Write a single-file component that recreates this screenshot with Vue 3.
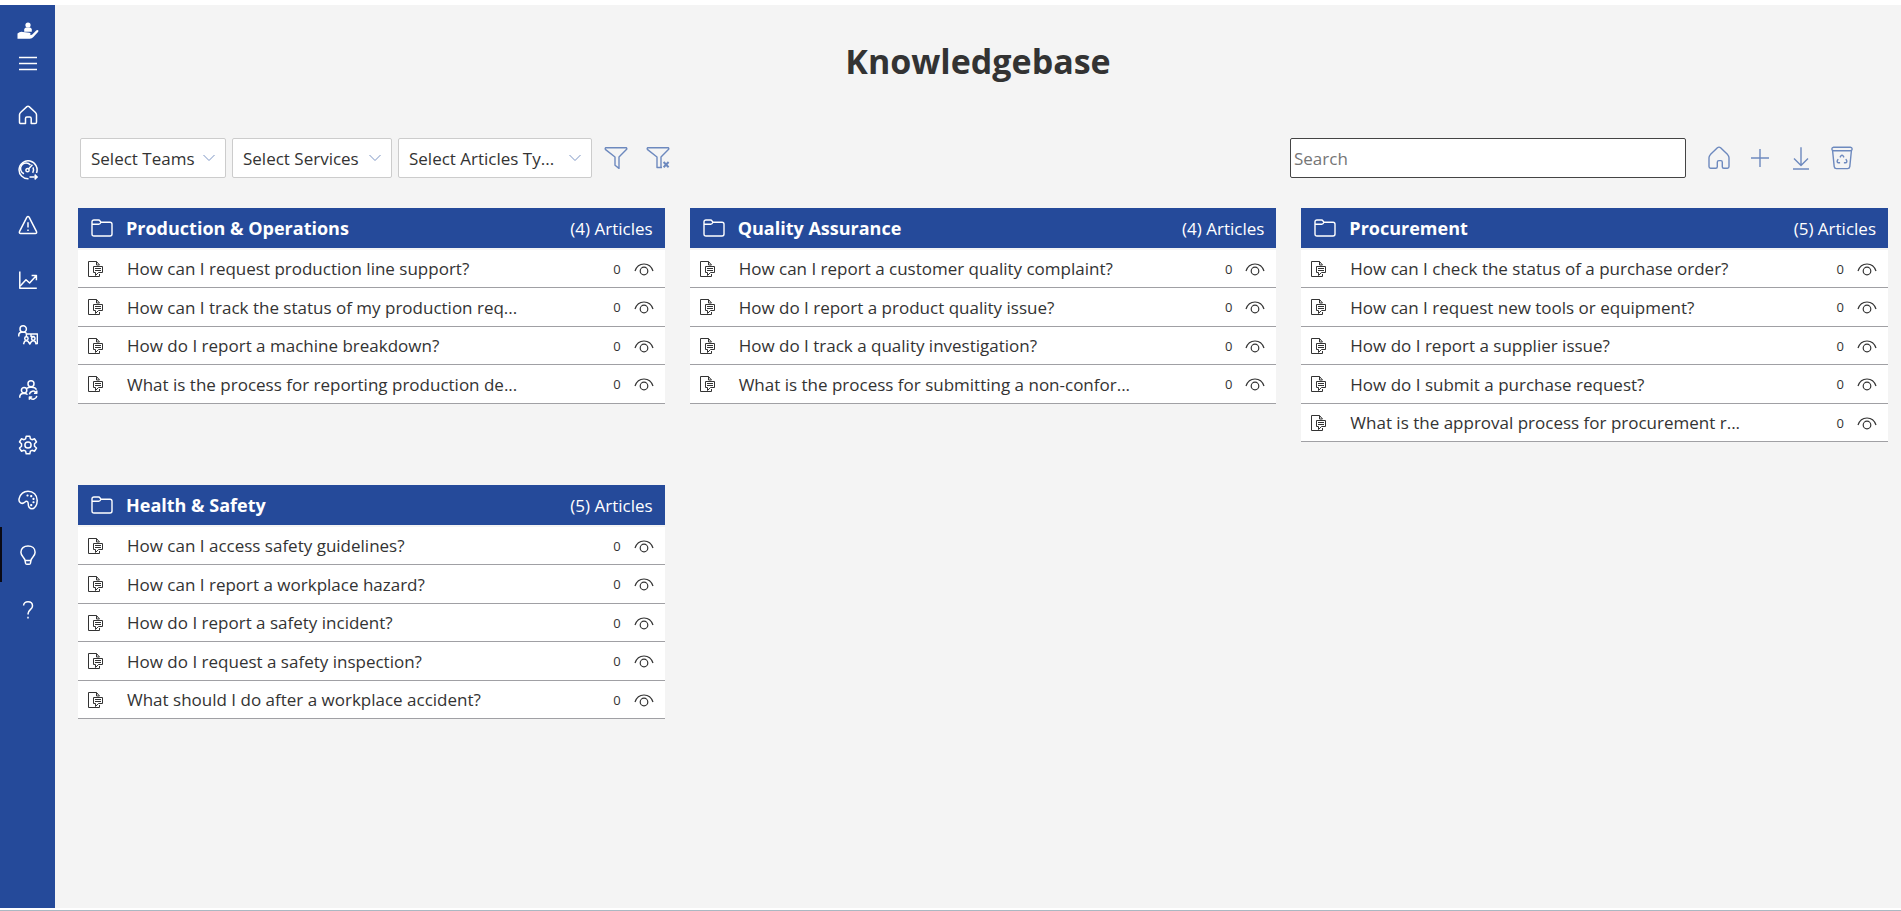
<script setup>
import { reactive, ref } from 'vue'

defineOptions({
  name: 'KnowledgeBase'
})

const search = ref('')

const filters = reactive([
  { id: 'teams', label: 'Select Teams', size: 'small' },
  { id: 'services', label: 'Select Services', size: 'medium' },
  { id: 'types', label: 'Select Articles Ty...', size: 'large' }
])

const navItems = [
  {
    name: 'Home',
    paths: ['M2.8 7.2 8.9 1.6q1.1-.9 2.2 0l6.1 5.6q1.3 1.2 1.3 2.6v7.4q0 1.4-1.4 1.4h-3.9v-5.2q0-1.4-1.4-1.4H8.9q-1.4 0-1.4 1.4v5.2H2.9q-1.4 0-1.4-1.4V9.8q0-1.4 1.3-2.6z']
  },
  {
    name: 'Dashboard',
    paths: [
      'M10.5 18.8A9 9 0 1 1 18.5 13',
      'M6 13.8A5.6 5.6 0 1 1 12.4 5M15 7.4a5.6 5.6 0 0 1-.3 5.4',
      'M14.4 4.8 10.5 9',
      'M7.9 10.2a1.6 1.6 0 1 0 3.2 0 1.6 1.6 0 1 0-3.2 0z',
      'M11.5 17h7.6M16.6 14.6 19.2 17l-2.6 2.4'
    ]
  },
  {
    name: 'Incidents',
    paths: ['M8.9 2.2q1.1-1.6 2.2 0l7.3 14.2q.9 1.9-1.2 2.1H2.8q-2.1-.2-1.2-2.1z', 'M10 7.2v5.4M10 14.4v1.6']
  },
  {
    name: 'Reports',
    paths: ['M1.8 1.5v16.7h17', 'M2.2 16 8 9.8l3.6 3.2 6.6-7.2M13.6 5.4h4.8v4.8']
  },
  {
    name: 'Training',
    paths: [
      'M2 4a3.2 3.2 0 1 0 6.4 0 3.2 3.2 0 1 0-6.4 0z',
      'M.8 11.5V9.6q.3-2.3 2.8-2.3h2.8q1.5 0 2.2 1.5',
      'M8.4 12V9h11v9.5h-1.8M13 9v2.5h3.5',
      'M6.7 13.5a1.7 1.7 0 1 0 3.4 0 1.7 1.7 0 1 0-3.4 0zM13.6 13.5a1.7 1.7 0 1 0 3.4 0 1.7 1.7 0 1 0-3.4 0z',
      'M5.5 19.2l1-2.8q1.8-1.2 3.6 0l1.7 2.6 1.7-2.6q1.8-1.2 3.6 0l1.2 2.8'
    ]
  },
  {
    name: 'Teams',
    paths: [
      'M10 3.8a3 3 0 1 0 6 0 3 3 0 1 0-6 0z',
      'M3.4 10.2a2.7 2.7 0 1 0 5.4 0 2.7 2.7 0 1 0-5.4 0z',
      'M1.8 17.8v-1.4q.3-2.8 3-3h2.2q1.8.1 2.4 1.4M9 8.4q1-1.2 3.4-1.2h1q4.2-.1 5 2.6',
      'M11.4 14.4a3.8 3.8 0 0 1 6.8-1.8M18.8 10.4v2.8H16M18.8 15.8a3.8 3.8 0 0 1-6.8 1.8M11.4 19.8V17h2.8'
    ]
  },
  {
    name: 'Settings',
    paths: [
      'M8.2 1.2h3.6l.6 2.6 1.6.9 2.6-.9 1.9 3.2-2 1.8v2.4l2 1.8-1.9 3.2-2.6-.9-1.6.9-.6 2.6H8.2l-.6-2.6-1.6-.9-2.6.9L1.5 13l2-1.8V8.8L1.5 7l1.9-3.2 2.6.9 1.6-.9z',
      'M6.9 10a3.1 3.1 0 1 0 6.2 0 3.1 3.1 0 1 0-6.2 0z'
    ]
  },
  {
    name: 'Themes',
    paths: [
      'M1.2 8.4C2.6 3.6 6 1.2 10 1.2c5.3 0 9.2 3.9 9.2 9.2 0 4.8-2.5 8.4-5.2 8.4-3.6 0-3.8-2.7-3.8-5.2 0-2.3-1.9-3-3.2-1.6-1.2 1.2-2.9 1.8-4.4.9-1.7-1-1.9-2.7-1.4-4.5z',
      'M9.2 5.2h.6v.6h-.6zM12.9 5.8h.6v.6h-.6zM15.2 8.6h.6v.6h-.6zM15.2 12h.6v.6h-.6zM12.9 14.8h.6v.6h-.6z'
    ]
  },
  {
    name: 'Knowledgebase',
    active: true,
    paths: ['M7 15.4C6.6 12 2.9 11.4 2.9 7.2 2.9 3.4 6 1 10 1s7.1 2.4 7.1 6.2c0 4.2-3.7 4.8-4.1 8.2zM7 15.4l.6 3q.2.8 1.1.8h2.6q.9 0 1.1-.8l.6-3']
  },
  {
    name: 'Help',
    paths: ['M5.6 5.6C5.6 3 7.4 1.8 10 1.8s4.5 1.5 4.5 4.1c0 3.5-4.4 3.9-4.4 7.6v1', 'M10 16.8v1.6']
  }
]

const actions = [
  {
    name: 'Home',
    paths: ['M3.4 8.6 10.4 1.8q1.6-1.3 3.2 0l7 6.8q1.4 1.6 1.4 3.2v8.8q0 1.6-1.6 1.6h-3.6q-1.5 0-1.5-1.5v-4.5q0-1.6-1.4-1.6h-2q-1.6 0-1.6 1.6v4.5q0 1.5-1.5 1.5H3.6Q2 22.2 2 20.6v-8.800q0-1.600 1.400-3.200z']
  },
  { name: 'Add', paths: ['M12 3v18M3 12h18'] },
  { name: 'Download', paths: ['M12 1.2v18M5 12.600l7 7 7-7M4 23h16'] },
  {
    name: 'Recycle bin',
    paths: [
      'M3.6 1.2h16.8q1.6.1 1.8 1.8-.1 1.7-1.8 1.8H3.6Q1.900 4.700 1.800 3 2 1.300 3.600 1.200z',
      'M2.6 4.8l1.6 15.8q.3 2 2.2 2h11.200q1.900 0 2.200-2l1.600-15.800',
      'M10 11.4l.9-1.5q1.1-1.5 2.2 0l.9 1.5M15.8 13.2l.9 1.5q.6 1.8-1.200 2h-1.600M10.100 16.700H8.500q-1.800-.2-1.200-2l.9-1.500'
    ]
  }
]

const categories = [
  {
    name: 'Production & Operations',
    articles: [
      'How can I request production line support?',
      'How can I track the status of my production req...',
      'How do I report a machine breakdown?',
      'What is the process for reporting production de...'
    ]
  },
  {
    name: 'Quality Assurance',
    articles: [
      'How can I report a customer quality complaint?',
      'How do I report a product quality issue?',
      'How do I track a quality investigation?',
      'What is the process for submitting a non-confor...'
    ]
  },
  {
    name: 'Procurement',
    articles: [
      'How can I check the status of a purchase order?',
      'How can I request new tools or equipment?',
      'How do I report a supplier issue?',
      'How do I submit a purchase request?',
      'What is the approval process for procurement r...'
    ]
  },
  {
    name: 'Health & Safety',
    articles: [
      'How can I access safety guidelines?',
      'How can I report a workplace hazard?',
      'How do I report a safety incident?',
      'How do I request a safety inspection?',
      'What should I do after a workplace accident?'
    ]
  }
]
</script>

<template>
  <div class="layout">
    <aside class="sidebar">
      <a href="#" class="logo" aria-label="Service portal">
        <svg viewBox="0 0 22 18" width="22" height="18">
          <circle cx="11" cy="3" r="2.6" />
          <path d="M7.2 9.8V7.6q.2-2 2.2-2h3.2q2 0 2.2 2v2.2z" />
          <path d="M.5 11.6q2.6-2.4 5.4-1.6l6.6.8q1.8.6.9 1.9l-1 .5 2.6-.4 4.2-4.4q1.4-1 2.2.2.2.7-.4 1.3l-4.6 5.1q-1.4 1.7-3.6 1.8H.5z" />
        </svg>
      </a>
      <button type="button" class="menu-toggle" aria-label="Menu">
        <svg viewBox="0 0 20 20" width="20" height="20">
          <path d="M1 3.5h18M1 9.5h18M1 15.5h18" />
        </svg>
      </button>
      <nav class="nav">
        <a
          v-for="item in navItems"
          :key="item.name"
          href="#"
          class="nav-link"
          :class="{ active: item.active }"
          :aria-label="item.name"
        >
          <svg viewBox="0 0 20 20" width="20" height="20">
            <path v-for="d in item.paths" :key="d" :d="d" />
          </svg>
        </a>
      </nav>
    </aside>

    <main class="content">
      <h1 class="page-title">Knowledgebase</h1>

      <div class="toolbar">
        <div class="filters">
          <div v-for="filter in filters" :key="filter.id" class="select-box" :class="filter.size">
            <select :id="filter.id" :aria-label="filter.label">
              <option>{{ filter.label }}</option>
            </select>
            <svg class="chevron" viewBox="0 0 12 8" width="12" height="8">
              <path d="M.5 1 6 6.5 11.5 1" />
            </svg>
          </div>
          <button type="button" class="icon-btn" aria-label="Apply filter">
            <svg viewBox="0 0 24 24" width="24" height="24">
              <path d="M1.600 1.800h20.800q.8.800 0 1.800L15 11v11.400l-4-3.200V11L1.600 3.600q-.8-1 0-1.800z" />
            </svg>
          </button>
          <button type="button" class="icon-btn" aria-label="Clear filter">
            <svg viewBox="0 0 24 24" width="24" height="24">
              <path d="M16 21.500h-5V11L1.600 3.600q-.8-1 0-1.800h20.800q.8.800 0 1.800L15 11v10.500" />
              <path class="cross" d="M17.600 16l5 5.200M22.600 16l-5 5.200" />
            </svg>
          </button>
        </div>

        <div class="tools">
          <input v-model="search" type="text" class="search" placeholder="Search" aria-label="Search" />
          <div class="actions">
            <button v-for="action in actions" :key="action.name" type="button" class="icon-btn" :aria-label="action.name">
              <svg viewBox="0 0 24 24" width="24" height="24">
                <path v-for="d in action.paths" :key="d" :d="d" />
              </svg>
            </button>
          </div>
        </div>
      </div>

      <div class="cards">
        <section v-for="category in categories" :key="category.name" class="card">
          <header class="card-header">
            <svg viewBox="0 0 22 18" width="22" height="18">
              <path d="M1 5V3q0-2 2-2h4.500q1 0 1.500 1l1 1.200H19q2 0 2 2V15q0 2-2 2H3q-2 0-2-2zM1 5.200h6.800q1.200 0 2.200-2" />
            </svg>
            <h2>{{ category.name }}</h2>
            <span>({{ category.articles.length }}) Articles</span>
          </header>
          <ul class="articles">
            <li v-for="article in category.articles" :key="article">
              <svg class="doc" viewBox="0 0 16 18" width="16" height="18">
                <path d="M12.5 14v2.500H1.500v-15h8L12.500 5M9.500 1.500v3.500h3" />
                <path class="note" d="M6.500 6.500h9v6h-4L8.500 15.500v-3h-2z" />
                <path d="M8 8.500h6M8 10.500h6" />
              </svg>
              <a href="#">{{ article }}</a>
              <span class="views">0</span>
              <svg class="eye" viewBox="0 0 20 14" width="20" height="14">
                <path d="M1 9C2.600 4.200 5.800 2 10 2s7.400 2.200 9 7" />
                <circle cx="10" cy="9" r="3.8" />
              </svg>
            </li>
          </ul>
        </section>
      </div>
    </main>
  </div>
</template>

<style>
body {
  background-color: #fff;
}
</style>

<style scoped>
* {
  box-sizing: border-box;
}

.layout {
  display: flex;
  min-height: 100vh;
  padding: 5px 0 2px;
  border-bottom: 1px solid #aab8c2;
  background-color: #fff;
  color: #333;
  font-family: 'Segoe UI', 'Open Sans', sans-serif;
  font-size: 17px;
}

svg {
  flex-shrink: 0;
  fill: none;
  stroke: currentColor;
  stroke-width: 1.4;
  stroke-linejoin: round;
}

a {
  color: inherit;
  text-decoration: none;
}

button {
  display: flex;
  align-items: center;
  justify-content: center;
  padding: 0;
  border: none;
  background: none;
  color: inherit;
  cursor: pointer;
}

.sidebar {
  display: flex;
  flex-direction: column;
  flex-shrink: 0;
  width: 55px;
  padding-top: 17px;
  background-color: #254a9a;
  color: #fff;
}

.logo {
  display: flex;
  justify-content: center;
}

.logo svg {
  fill: currentColor;
  stroke: none;
}

.menu-toggle {
  height: 47px;
}

.nav-link {
  display: flex;
  align-items: center;
  justify-content: center;
  height: 55px;
  border-left: 2px solid transparent;
  border-right: 2px solid transparent;
}

.nav-link svg {
  stroke-width: 1.5;
}

.nav-link.active {
  border-left-color: #0a0a14;
}

.content {
  flex: 1;
  min-width: 0;
  padding: 32px 13px 32px 23px;
  background-color: #f4f4f4;
}

.page-title {
  margin: 0 0 53px;
  padding-right: 10px;
  font-size: 34px;
  line-height: 48px;
  font-weight: 700;
  text-align: center;
}

.toolbar {
  display: flex;
  align-items: center;
  justify-content: space-between;
  margin-bottom: 30px;
  padding: 0 34px 0 2px;
}

.filters,
.tools,
.actions {
  display: flex;
  align-items: center;
}

.filters {
  gap: 6px;
}

.select-box {
  position: relative;
}

.select-box.small {
  width: 146px;
}

.select-box.medium {
  width: 160px;
}

.select-box.large {
  width: 194px;
}

select {
  display: block;
  appearance: none;
  width: 100%;
  height: 40px;
  padding: 0 10px;
  border: 1px solid #ccc;
  border-radius: 2px;
  background-color: #fff;
  color: #333;
  font-family: inherit;
  font-size: 17px;
}

.chevron {
  position: absolute;
  top: 16px;
  right: 11px;
  color: #7d95c4;
  stroke-width: 1;
  pointer-events: none;
}

.icon-btn {
  color: #6d89be;
}

.filters .icon-btn {
  width: 36px;
}

.cross {
  stroke-width: 2;
}

.tools {
  gap: 21px;
}

.search {
  width: 396px;
  height: 40px;
  padding: 0 3px;
  border: 1px solid #444;
  border-radius: 2px;
  background-color: #fff;
  font-family: inherit;
  font-size: 17px;
}

.search::placeholder {
  color: #757575;
}

.actions {
  gap: 17px;
}

.cards {
  display: grid;
  grid-template-columns: repeat(3, 1fr);
  align-items: start;
  gap: 43px 25px;
}

.card-header {
  display: flex;
  align-items: center;
  height: 40px;
  padding: 0 12px 0 13px;
  background-color: #254a9a;
  color: #fff;
}

.card-header h2 {
  flex: 1;
  margin: 0 0 0 13px;
  font-size: 18px;
  font-weight: 700;
}

.articles {
  margin: 2px 0 0;
  padding: 0;
  list-style: none;
}

.articles li {
  display: flex;
  align-items: center;
  height: 38px;
  padding: 0 11px 0 9px;
  border-bottom: 1px solid #a0a0a4;
  background-color: #fff;
}

.articles li:nth-child(even) {
  height: 39px;
}

.articles a {
  flex: 1;
  min-width: 0;
  margin-left: 24px;
  white-space: nowrap;
}

.views {
  margin-right: 13px;
  font-size: 13px;
}

.doc {
  stroke-width: 1;
}

.eye {
  stroke-width: 1.2;
}

.note {
  fill: #fff;
}
</style>
